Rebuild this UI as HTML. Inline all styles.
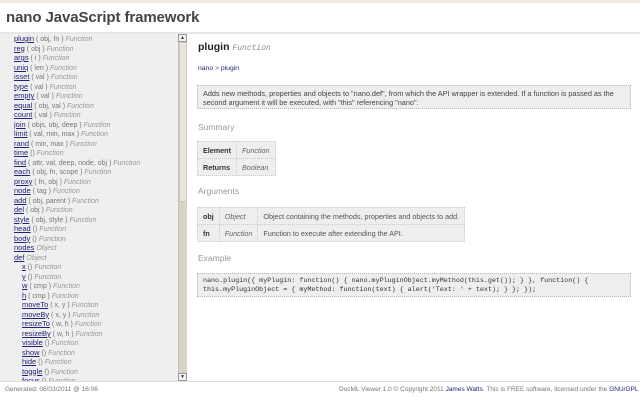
<!DOCTYPE html>
<html><head><meta charset="utf-8"><style>
*{margin:0;padding:0;box-sizing:border-box}
body{width:640px;height:400px;overflow:hidden;background:#fff;font-family:"Liberation Sans",sans-serif;position:relative;color:#333}
#top{position:absolute;left:0;top:0;width:640px;height:3px;background:#efe9e4}
#hdr{position:absolute;left:6px;top:9px;font-size:15px;font-weight:bold;color:#444;letter-spacing:-0.1px}
#hline{position:absolute;left:0;top:32px;width:640px;height:2px;background:#e6e6e6}
#side{position:absolute;left:0;top:34px;width:178px;height:347px;background:#efefef;overflow:hidden}
.it{position:absolute;left:14px;font-size:7px;color:#777;white-space:nowrap;line-height:9px}
.it a{color:#22227a;text-decoration:underline;font-size:7.5px}
.it i{color:#999;font-style:italic}
.n{left:22px}
#sb{position:absolute;left:178px;top:34px;width:9px;height:347px;background:#d9d3c7;border-left:1px solid #c8c2b6}
#th{position:absolute;left:179px;top:42px;width:8px;height:160px;background:#e9e4dc;border:1px solid #cfc9bd}
.ar{position:absolute;left:178px;width:9px;height:8px;background:#f4f2ee;border:1px solid #999;font-size:5px;text-align:center;line-height:6px;color:#333}
#foot{position:absolute;left:0;top:381px;width:640px;height:1px;background:#ddd}
.ft{position:absolute;top:386px;font-size:6.5px;color:#777;white-space:nowrap}
.ft a{color:#22227a}
h1{position:absolute;left:198px;top:41px;font-size:10.5px;color:#222}
h1 i{font-family:"Liberation Mono",monospace;font-weight:normal;color:#888;font-size:8px}
.bc{position:absolute;left:198px;top:65px;font-size:6.8px;color:#555}
.bc a{color:#22227a}
.box{position:absolute;left:197px;width:434px;background:#eee;border:1px dotted #bbb;font-size:7.3px;color:#444;padding:3px 5px;line-height:9px}
h2{position:absolute;left:198px;font-size:8.5px;font-weight:normal;color:#999}
table{position:absolute;left:197px;border-collapse:collapse;font-size:7.2px;background:#eee}
td{border:1px dotted #ccc;padding:0 5px;height:17px;color:#555}
td.b{font-weight:bold;color:#333}
td.i{font-style:italic;color:#666}
pre{font-family:"Liberation Mono",monospace;font-size:6.7px;line-height:9px;color:#333}
</style></head><body>
<div id="top"></div>
<div id="hdr">nano JavaScript framework</div>
<div id="hline"></div>
<div id="side">
<div class="it" style="top:0px"><a>plugin</a> ( obj, fn ) <i>Function</i></div>
<div class="it" style="top:9.5px"><a>reg</a> ( obj ) <i>Function</i></div>
<div class="it" style="top:19px"><a>args</a> ( i ) <i>Function</i></div>
<div class="it" style="top:28.5px"><a>uniq</a> ( len ) <i>Function</i></div>
<div class="it" style="top:38px"><a>isset</a> ( val ) <i>Function</i></div>
<div class="it" style="top:47.5px"><a>type</a> ( val ) <i>Function</i></div>
<div class="it" style="top:57px"><a>empty</a> ( val ) <i>Function</i></div>
<div class="it" style="top:66.5px"><a>equal</a> ( obj, val ) <i>Function</i></div>
<div class="it" style="top:76px"><a>count</a> ( val ) <i>Function</i></div>
<div class="it" style="top:85.5px"><a>join</a> ( objs, obj, deep ) <i>Function</i></div>
<div class="it" style="top:95px"><a>limit</a> ( val, min, max ) <i>Function</i></div>
<div class="it" style="top:104.5px"><a>rand</a> ( min, max ) <i>Function</i></div>
<div class="it" style="top:114px"><a>time</a> () <i>Function</i></div>
<div class="it" style="top:123.5px"><a>find</a> ( attr, val, deep, node, obj ) <i>Function</i></div>
<div class="it" style="top:133px"><a>each</a> ( obj, fn, scope ) <i>Function</i></div>
<div class="it" style="top:142.5px"><a>proxy</a> ( fn, obj ) <i>Function</i></div>
<div class="it" style="top:152px"><a>node</a> ( tag ) <i>Function</i></div>
<div class="it" style="top:161.5px"><a>add</a> ( obj, parent ) <i>Function</i></div>
<div class="it" style="top:171px"><a>del</a> ( obj ) <i>Function</i></div>
<div class="it" style="top:180.5px"><a>style</a> ( obj, style ) <i>Function</i></div>
<div class="it" style="top:190px"><a>head</a> () <i>Function</i></div>
<div class="it" style="top:199.5px"><a>body</a> () <i>Function</i></div>
<div class="it" style="top:209px"><a>nodes</a> <i>Object</i></div>
<div class="it" style="top:218.5px"><a>def</a> <i>Object</i></div>
<div class="it n" style="top:228px"><a>x</a> () <i>Function</i></div>
<div class="it n" style="top:237.5px"><a>y</a> () <i>Function</i></div>
<div class="it n" style="top:247px"><a>w</a> ( cmp ) <i>Function</i></div>
<div class="it n" style="top:256.5px"><a>h</a> ( cmp ) <i>Function</i></div>
<div class="it n" style="top:266px"><a>moveTo</a> ( x, y ) <i>Function</i></div>
<div class="it n" style="top:275.5px"><a>moveBy</a> ( x, y ) <i>Function</i></div>
<div class="it n" style="top:285px"><a>resizeTo</a> ( w, h ) <i>Function</i></div>
<div class="it n" style="top:294.5px"><a>resizeBy</a> ( w, h ) <i>Function</i></div>
<div class="it n" style="top:304px"><a>visible</a> () <i>Function</i></div>
<div class="it n" style="top:313.5px"><a>show</a> () <i>Function</i></div>
<div class="it n" style="top:323px"><a>hide</a> () <i>Function</i></div>
<div class="it n" style="top:332.5px"><a>toggle</a> () <i>Function</i></div>
<div class="it n" style="top:342px"><a>focus</a> () <i>Function</i></div>
</div>
<div id="sb"></div><div id="th"></div>
<div class="ar" style="top:34px">▲</div>
<div class="ar" style="top:373px">▼</div>
<div id="foot"></div>
<div class="ft" style="left:5px">Generated: 06/03/2011 @ 16:06</div>
<div class="ft" style="left:339px">DocML Viewer 1.0 © Copyright 2011 <a>James Watts</a>. This is FREE software, licensed under the <a>GNU/GPL</a></div>

<h1>plugin <i>Function</i></h1>
<div class="bc"><a>nano</a> &gt; <a>plugin</a></div>
<div class="box" style="top:85px;height:24px">Adds new methods, properties and objects to "nano.def", from which the API wrapper is extended. If a function is passed as the second argument it will be executed, with "this" referencing "nano".</div>
<h2 style="top:122px">Summary</h2>
<table style="top:141px"><tr><td class="b">Element</td><td class="i">Function</td></tr><tr><td class="b">Returns</td><td class="i">Boolean</td></tr></table>
<h2 style="top:186px">Arguments</h2>
<table style="top:207px"><tr><td class="b">obj</td><td class="i">Object</td><td>Object containing the methods, properties and objects to add.</td></tr><tr><td class="b">fn</td><td class="i">Function</td><td>Function to execute after extending the API.</td></tr></table>
<h2 style="top:253px">Example</h2>
<div class="box" style="top:273px;height:24px;padding-top:3px"><pre>nano.plugin({ myPlugin: function() { nano.myPluginObject.myMethod(this.get()); } }, function() {
this.myPluginObject = { myMethod: function(text) { alert('Text: ' + text); } }; });</pre></div>
</body></html>
